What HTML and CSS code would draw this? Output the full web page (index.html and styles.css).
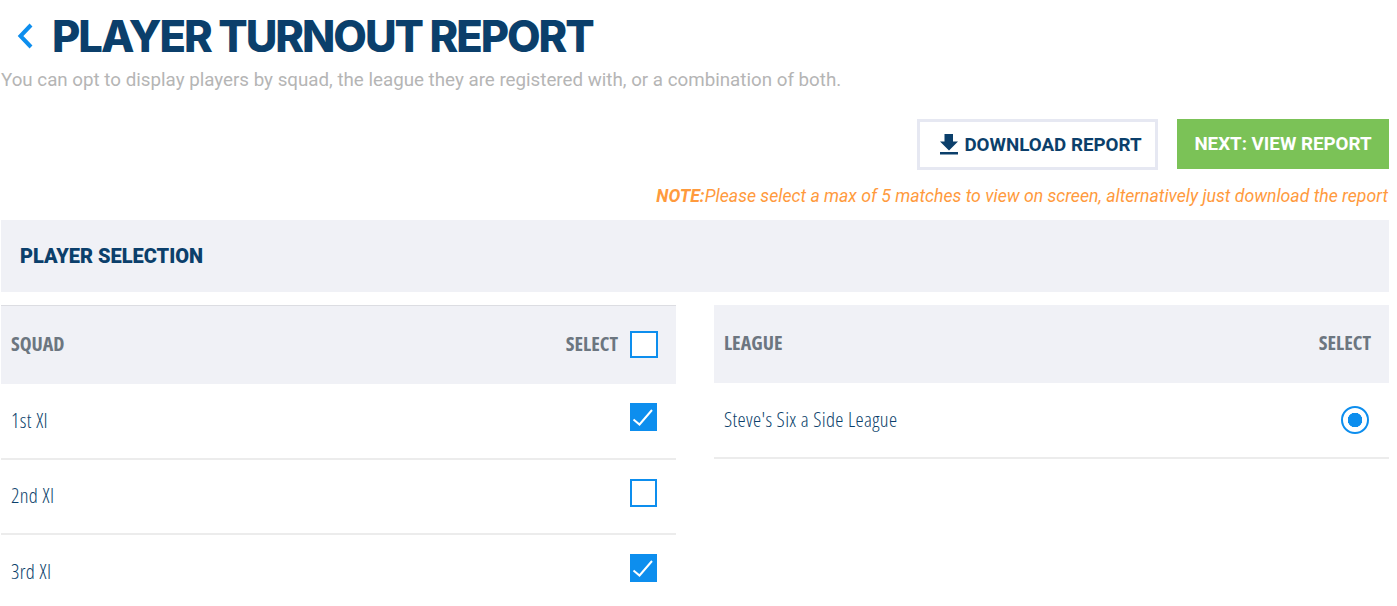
FILE: index.html
```html
<!DOCTYPE html>
<html lang="en">
<head>
<meta charset="utf-8">
<title>Player Turnout Report</title>
<link rel="stylesheet" href="styles.css">
</head>
<body>
<main class="page">
  <header class="title-row">
    <svg class="back" width="16" height="26" viewBox="0 0 16 26"><path d="M14 2 3.5 13 14 24" fill="none" stroke="#0d8eee" stroke-width="4"/></svg>
    <h1 class="title">PLAYER TURNOUT REPORT</h1>
  </header>
  <p class="subtitle">You can opt to display players by squad, the league they are registered with, or a combination of both.</p>
  <div class="actions">
    <a class="btn btn-outline">
      <svg class="dl" width="18" height="21" viewBox="0 0 18 21"><path d="M4.5 0H13V7.5H18L9 16.5 0 7.5H4.5z" fill="#0b3f6b"/><rect y="18" width="18" height="2.5" fill="#0b3f6b"/></svg>
      <span class="squeeze">DOWNLOAD REPORT</span>
    </a>
    <a class="btn btn-green"><span class="squeeze">NEXT: VIEW REPORT</span></a>
  </div>
  <p class="note"><b>NOTE:</b>Please select a max of 5 matches to view on screen, alternatively just download the report</p>
  <h2 class="band">PLAYER SELECTION</h2>
  <div class="columns">
    <section class="col">
      <div class="head head-squad"><span class="cond strong">SQUAD</span><div class="head-right"><span class="cond strong">SELECT</span><span class="box box-head"></span></div></div>
      <div class="row row-first"><span class="cond">1st XI</span><span class="box checked"><svg width="27" height="28" viewBox="0 0 27 28"><path d="M3.5 16.5l6 5L22 7" fill="none" stroke="#fff" stroke-width="2"/></svg></span></div>
      <div class="row"><span class="cond">2nd XI</span><span class="box"></span></div>
      <div class="row"><span class="cond cond-last">3rd XI</span><span class="box checked"><svg width="27" height="28" viewBox="0 0 27 28"><path d="M3.5 16.5l6 5L22 7" fill="none" stroke="#fff" stroke-width="2"/></svg></span></div>
    </section>
    <section class="col">
      <div class="head head-league"><span class="cond strong">LEAGUE</span><span class="cond strong">SELECT</span></div>
      <div class="row row-first row-league"><span class="cond">Steve's Six a Side League</span><span class="radio"></span></div>
    </section>
  </div>
</main>
</body>
</html>
```
FILE: styles.css
```css
* { box-sizing: border-box; }
html, body { margin: 0; padding: 0; background: #fff; overflow: hidden; }
body { height: 606px; font-family: Roboto, sans-serif; }
.page { width: 1389px; padding-left: 1px; }
.title-row { display: flex; align-items: center; height: 69px; padding-left: 16px; }
.back { flex: none; margin-right: 19px; margin-top: 3px; }
.title { margin: 3px 0 0; font-family: Inter, sans-serif; font-weight: 800; font-size: 43.5px; line-height: 66px; color: #0b3f6b; letter-spacing: -2.03px; white-space: nowrap; }
.subtitle { margin: 0; height: 50px; font-size: 18.75px; line-height: 23px; color: #b5b5b5; }
.actions { display: flex; justify-content: flex-end; gap: 19px; height: 51px; }
.btn { display: flex; align-items: center; justify-content: center; font-weight: 700; font-size: 18.75px; }
.squeeze { display: inline-block; white-space: nowrap; }
.btn-outline { width: 241px; height: 51px; border: 3px solid #e6e8f2; color: #0b3f6b; gap: 6px; padding-left: 7px; }
.dl { flex: none; }
.btn-green { width: 212px; height: 50px; background: #7bc257; color: #fff; }
.note { margin: 15px 0 0; height: 35px; text-align: right; font-style: italic; font-size: 17.65px; line-height: 23px; color: #ff9a3d; padding-right: 1px; }
.note b { font-weight: 700; }
.band { margin: 0; height: 72px; padding-left: 19px; background: #f0f1f6; color: #0b3f6b; font-size: 20px; font-weight: 900; line-height: 73px; }
.columns { display: grid; grid-template-columns: 675px 675px; column-gap: 38px; margin-top: 13px; }
.cond { font-family: "Open Sans", sans-serif; font-stretch: 75%; font-size: 20.5px; font-weight: 300; letter-spacing: 0.36px; color: #0b3f6b; white-space: nowrap; margin-bottom: 3px; }
.cond-last { margin-bottom: 1px; }
.strong { font-weight: 700; letter-spacing: 0; color: #6c7680; font-size: 20px; }
.head { display: flex; justify-content: space-between; align-items: center; background: #f0f1f6; padding: 0 18px 0 10px; }
.head-squad { height: 79px; border-top: 1px solid #dcdde2; }
.head-league { height: 78px; padding-right: 18px; }
.head-right { display: flex; align-items: center; gap: 12px; }
.row { display: flex; justify-content: space-between; align-items: center; height: 75px; padding: 0 19px 0 10px; border-bottom: 2px solid #ececec; }
.row-first { height: 76px; }
.row-league { padding-right: 20px; }
.box { display: block; width: 27px; height: 28px; border: 2px solid #0d8eee; background: #fff; margin-bottom: 8px; }
.box-head { width: 28px; height: 27px; margin-bottom: 2px; }
.box.checked { background: #0d8eee; border: 0; }
.box svg { display: block; }
.radio { width: 28px; height: 28px; border-radius: 50%; border: 2px solid #0d8eee; background: radial-gradient(circle, #0d8eee 0 7px, #fff 7.5px); }
```
